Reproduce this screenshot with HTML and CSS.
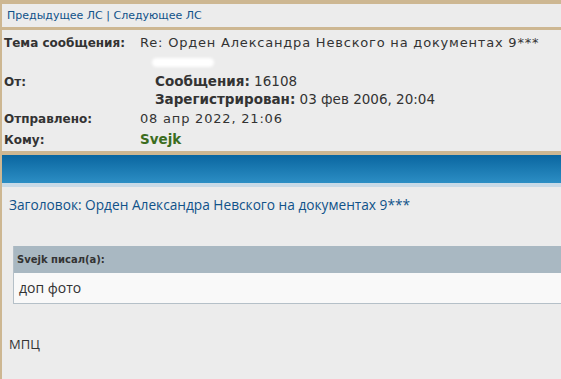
FILE: index.html
```html
<!DOCTYPE html>
<html lang="ru">
<head>
    <meta charset="utf-8" />
    <title>Личные сообщения</title>
    <link rel="stylesheet" href="styles.css">
</head>
<body>
<div class="page">
    <div class="topbar">
        <a href="#">Предыдущее ЛС</a> | <a href="#">Следующее ЛС</a>
    </div>

    <div class="headers">
        <div class="row">
            <span class="label">Тема сообщения:</span>
            <span class="value">Re: Орден Александра Невского на документах 9***</span>
        </div>
        <div class="row blobrow">
            <span class="label"></span>
            <span class="blob"></span>
        </div>
        <div class="row from">
            <span class="label">От:</span>
            <span class="author">
                <span><b>Сообщения:</b> 16108</span>
                <span><b>Зарегистрирован:</b> 03 фев 2006, 20:04</span>
            </span>
        </div>
        <div class="row">
            <span class="label">Отправлено:</span>
            <span class="value">08 апр 2022, 21:06</span>
        </div>
        <div class="row">
            <span class="label">Кому:</span>
            <span class="user">Svejk</span>
        </div>
    </div>

    <div class="bluebar"></div>

    <div class="post">
        <div class="subject">Заголовок: Орден Александра Невского на документах 9***</div>

        <div class="quote">
            <div class="quote-head">Svejk писал(а):</div>
            <div class="quote-body">доп фото</div>
        </div>

        <div class="text">МПЦ</div>
    </div>
</div>
</body>
</html>
```

FILE: styles.css
```css
body {
    margin: 0;
    background: #ececec;
    font-family: "DejaVu Sans", Verdana, sans-serif;
    color: #333;
}
.page {
    border-left: 2px solid #cdb792;
    min-height: 379px;
    overflow: hidden;
}
a {
    color: #105289;
    text-decoration: none;
}
.topbar {
    border-top: 4px solid #cdb792;
    border-bottom: 3px solid #cdb792;
    height: 23px;
    line-height: 23px;
    padding-left: 5px;
    font-size: 11px;
    color: #105289;
}
.headers {
    padding: 2px 0 1px 2px;
    font-size: 13px;
}
.row {
    display: flex;
    align-items: baseline;
    height: 21px;
    line-height: 21px;
}
.row.from {
    height: 36px;
}
.label {
    width: 136px;
    flex-shrink: 0;
    font-size: 12px;
    font-weight: bold;
    color: #333;
}
.value {
    color: #333;
    letter-spacing: 0.8px;
}
.blobrow {
    height: 19px;
    align-items: center;
}
.blob {
    display: block;
    width: 62px;
    height: 9px;
    margin: 0 0 0 12px;
    background: #fff;
    border-radius: 5px;
    filter: blur(1.5px);
}
.author {
    display: flex;
    flex-direction: column;
    padding-left: 15px;
    line-height: 18px;
    font-size: 13.5px;
}
.user {
    color: #3c6d1e;
    font-weight: bold;
    font-size: 13.5px;
}
.bluebar {
    border-top: 4px solid #cdb792;
    border-bottom: 4px solid #c8dae7;
    height: 28px;
    background: linear-gradient(#0a66a0, #2c8ec4);
}
.post {
    padding: 8px 0 0 7px;
}
.subject {
    font-family: "Open Sans", sans-serif;
    font-size: 13.7px;
    color: #105289;
    line-height: 20px;
}
.quote {
    margin: 31px -20px 0 4px;
    border: 1px solid #b5c0c8;
    border-top: 0;
    border-right: 0;
    background: #f9f9f9;
}
.quote-head {
    background: #a9b8c2;
    height: 27px;
    line-height: 27px;
    padding-left: 3px;
    font-size: 10px;
    font-weight: bold;
    color: #333;
}
.quote-body {
    height: 30px;
    line-height: 30px;
    padding-left: 5px;
    font-family: "Open Sans", sans-serif;
    font-size: 14px;
    color: #333;
}
.text {
    margin-top: 30px;
    line-height: 20px;
    font-family: "Open Sans", sans-serif;
    font-size: 13px;
    color: #333;
}
```
